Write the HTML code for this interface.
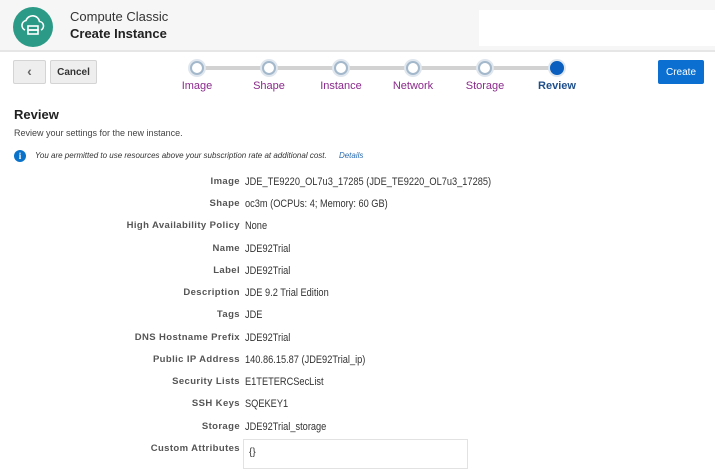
<!DOCTYPE html>
<html><head><style>
*{margin:0;padding:0;box-sizing:border-box}
body{width:715px;height:466px;overflow:hidden;background:#fff;font-family:"Liberation Sans",Arial,sans-serif;color:#333;position:relative}
.hdr{position:absolute;left:0;top:0;width:715px;height:52px;background:#f6f6f6;border-bottom:2px solid #e6e6e6}
.wbox{position:absolute;left:479px;top:10px;width:236px;height:36px;background:#fff}
.logo{position:absolute;left:13px;top:7px;width:40px;height:40px;border-radius:50%;background:#2b9a86}
.t1{position:absolute;left:70px;top:9px;font-size:13px;color:#333}
.t2{position:absolute;left:70px;top:26px;font-size:13px;font-weight:bold;color:#222}
.btn{position:absolute;top:60px;height:24px;background:#eee;border:1px solid #d4d4d4;border-radius:2px;font-size:10px;font-weight:bold;color:#333;text-align:center;line-height:24px}
.create{position:absolute;left:658px;top:60px;width:46px;height:24px;background:#0a6fd0;border-radius:2px;color:#fff;font-size:10px;line-height:25px;text-align:center}
.track{position:absolute;left:197px;top:66px;width:360px;height:4px;background:#d2d2d2}
.dot{position:absolute;top:61px;width:14px;height:14px;border-radius:50%;background:#fff;border:2px solid #a4b8cc;box-shadow:0 0 0 2px #dfe6ee}
.dot.on{background:#0a5fbf;border-color:#0a5fbf}
.sl{position:absolute;top:80px;font-size:11px;color:#8b2a8c;width:80px;margin-left:-40px;text-align:center}
.sl.on{color:#1f4f8b;font-weight:bold}
h2{position:absolute;left:14px;top:107px;font-size:13px;font-weight:bold;color:#222}
.sub{position:absolute;left:14px;top:128px;font-size:9px;color:#444}
.info{position:absolute;left:14px;top:150px;width:12px;height:12px;border-radius:50%;background:#0a73c9;color:#fff;font-size:9px;font-weight:bold;text-align:center;line-height:12px;font-family:"Liberation Serif",serif}
.itx{position:absolute;left:35px;top:151px;font-size:8px;font-style:italic;color:#333}
.itx a{color:#2a6bb0;margin-left:10px}
.lb{position:absolute;right:475px;font-size:9.5px;letter-spacing:0.4px;font-weight:bold;color:#555;white-space:nowrap}
.vl{position:absolute;left:245px;font-size:11px;color:#333;white-space:nowrap;transform:scaleX(.84);transform-origin:0 0;margin-top:1px}
.ca{position:absolute;left:243px;top:439px;width:225px;height:30px;border:1px solid #e2e2e2;font-size:10px;padding:7px 5px}
</style></head><body>
<div class="hdr"><div class="wbox"></div></div>
<div class="logo"><svg width="40" height="40" viewBox="0 0 40 40" fill="none" stroke="#fff" stroke-width="1.6"><path d="M12 23a5 5 0 0 1 1-9.5a7 7 0 0 1 13.5 1a4.5 4.5 0 0 1 1.5 8.5"/><rect x="15" y="19" width="10" height="4"/><rect x="15" y="23" width="10" height="4"/></svg></div>
<div class="t1">Compute Classic</div>
<div class="t2">Create Instance</div>
<div class="btn" style="left:13px;width:33px;font-size:14px;color:#666;line-height:21px">&#8249;</div>
<div class="btn" style="left:50px;width:47px">Cancel</div>
<div class="create">Create</div>
<div class="track"></div>
<div class="dot" style="left:190px"></div><div class="dot" style="left:262px"></div><div class="dot" style="left:334px"></div><div class="dot" style="left:406px"></div><div class="dot" style="left:478px"></div><div class="dot on" style="left:550px"></div>
<div class="sl" style="left:197px">Image</div><div class="sl" style="left:269px">Shape</div><div class="sl" style="left:341px">Instance</div><div class="sl" style="left:413px">Network</div><div class="sl" style="left:485px">Storage</div><div class="sl on" style="left:557px">Review</div>
<h2>Review</h2>
<div class="sub">Review your settings for the new instance.</div>
<div class="info">i</div>
<div class="itx">You are permitted to use resources above your subscription rate at additional cost. <a>Details</a></div>
<div class="lb" style="top:176px">Image</div><div class="vl" style="top:175px">JDE_TE9220_OL7u3_17285 (JDE_TE9220_OL7u3_17285)</div>
<div class="lb" style="top:198px">Shape</div><div class="vl" style="top:197px">oc3m (OCPUs: 4; Memory: 60 GB)</div>
<div class="lb" style="top:220px">High Availability Policy</div><div class="vl" style="top:219px">None</div>
<div class="lb" style="top:243px">Name</div><div class="vl" style="top:242px">JDE92Trial</div>
<div class="lb" style="top:265px">Label</div><div class="vl" style="top:264px">JDE92Trial</div>
<div class="lb" style="top:287px">Description</div><div class="vl" style="top:286px">JDE 9.2 Trial Edition</div>
<div class="lb" style="top:309px">Tags</div><div class="vl" style="top:308px">JDE</div>
<div class="lb" style="top:332px">DNS Hostname Prefix</div><div class="vl" style="top:331px">JDE92Trial</div>
<div class="lb" style="top:354px">Public IP Address</div><div class="vl" style="top:353px">140.86.15.87 (JDE92Trial_ip)</div>
<div class="lb" style="top:376px">Security Lists</div><div class="vl" style="top:375px">E1TETERCSecList</div>
<div class="lb" style="top:398px">SSH Keys</div><div class="vl" style="top:397px">SQEKEY1</div>
<div class="lb" style="top:421px">Storage</div><div class="vl" style="top:420px">JDE92Trial_storage</div>
<div class="lb" style="top:443px">Custom Attributes</div>
<div class="ca">{}</div>
</body></html>
